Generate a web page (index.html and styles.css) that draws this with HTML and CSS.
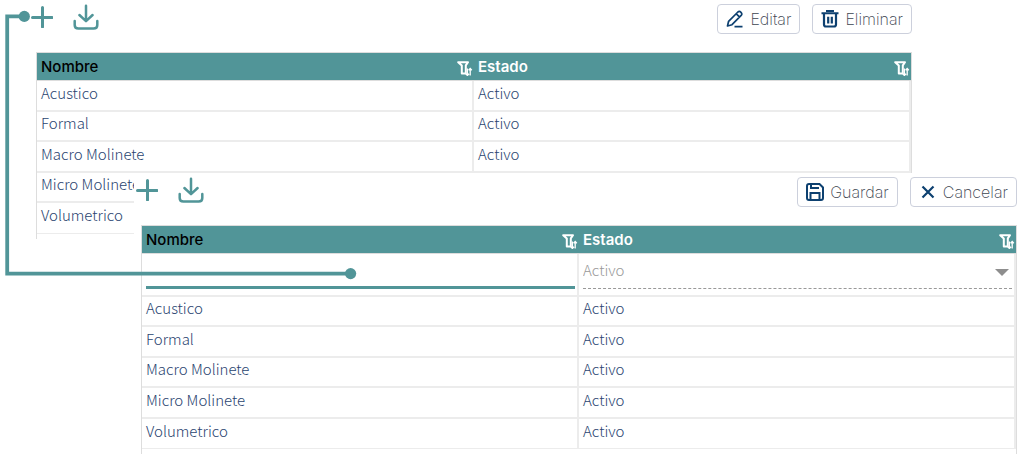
FILE: index.html
```html
<!DOCTYPE html>
<html lang="es">
<head>
<meta charset="utf-8">
<meta name="viewport" content="width=device-width, initial-scale=1">
<title>Catálogo</title>
<link rel="stylesheet" href="styles.css">
</head>
<body>
<svg class="symbols" aria-hidden="true">
  <symbol id="plus" viewBox="0 0 22 22"><path d="M11.5 1.5V21M1.5 11.5H21" fill="none" stroke="#519598" stroke-width="3" stroke-linecap="round"/></symbol>
  <symbol id="download" viewBox="0 0 26 26"><path d="M13 1.7V16.8M6.4 11L13 17.2L19.6 11M1.7 17V21Q1.7 24.6 5.4 24.6H20.6Q24.3 24.6 24.3 21V17" fill="none" stroke="#519598" stroke-width="2.5" stroke-linecap="round" stroke-linejoin="round"/></symbol>
  <symbol id="filter" viewBox="0 0 16 16"><path d="M1.2 2.2H11L8.8 5.4V13.6H4.8V5.6Z" fill="none" stroke="#fff" stroke-width="2" stroke-linejoin="round"/><path d="M10.4 8.5V15.5M8.8 13.7L10.4 15.5L12 13.7M13.2 15.5V8.5M11.6 10.3L13.2 8.5L14.8 10.3" fill="none" stroke="#fff" stroke-width="1.3"/></symbol>
  <symbol id="pencil" viewBox="0 0 18 18"><path d="M1.5 16L2.6 11.3L11.9 2Q13.4.8 15 2.3Q16.5 3.9 15.2 5.4L6 14.7ZM10.3 3.8L13.4 6.9M8.5 16.7H16.5" fill="none" stroke="#0d4070" stroke-width="1.7" stroke-linejoin="round"/></symbol>
  <symbol id="trash" viewBox="0 0 18 18"><path d="M5 1H13M.5 3.3H17.5" fill="none" stroke="#0d4070" stroke-width="2"/><path d="M3 4V14.5Q3 16.5 5 16.5H13Q15 16.5 15 14.5V4M7.2 6.8V13.5M10.8 6.8V13.5" fill="none" stroke="#0d4070" stroke-width="2.2"/></symbol>
  <symbol id="save" viewBox="0 0 18 18"><path d="M3 1H13.5L17 4.5V15Q17 17 15 17H3Q1 17 1 15V3Q1 1 3 1ZM5 1.5V5H13M4.5 17V10H13.5V17" fill="none" stroke="#0d4070" stroke-width="2"/></symbol>
  <symbol id="close" viewBox="0 0 18 18"><path d="M3.5 3.5L14.5 14.5M14.5 3.5L3.5 14.5" fill="none" stroke="#0d4070" stroke-width="2.2"/></symbol>
</svg>
<main class="stage">
  <section class="panel panel-list" aria-label="Listado">
    <div class="toolbar">
      <button class="tool" type="button" aria-label="Agregar"><svg class="icon-plus"><use href="#plus"/></svg></button>
      <button class="tool" type="button" aria-label="Descargar"><svg class="icon-download"><use href="#download"/></svg></button>
      <div class="actions">
        <button class="action" type="button"><svg class="icon"><use href="#pencil"/></svg>Editar</button>
        <button class="action" type="button"><svg class="icon"><use href="#trash"/></svg>Eliminar</button>
      </div>
    </div>
    <div class="grid">
      <table class="table">
        <thead><tr>
          <th class="sorted"><div class="head">Nombre<svg class="filter"><use href="#filter"/></svg></div></th>
          <th><div class="head">Estado<svg class="filter"><use href="#filter"/></svg></div></th>
        </tr></thead>
        <tbody>
          <tr><td>Acustico</td><td>Activo</td></tr>
          <tr><td>Formal</td><td>Activo</td></tr>
          <tr><td>Macro Molinete</td><td>Activo</td></tr>
          <tr><td>Micro Molinete</td><td></td></tr>
          <tr><td>Volumetrico</td><td></td></tr>
        </tbody>
      </table>
    </div>
  </section>

  <section class="panel panel-edit" aria-label="Nuevo registro">
    <div class="toolbar">
      <button class="tool" type="button" aria-label="Agregar"><svg class="icon-plus"><use href="#plus"/></svg></button>
      <button class="tool" type="button" aria-label="Descargar"><svg class="icon-download"><use href="#download"/></svg></button>
      <div class="actions">
        <button class="action" type="button"><svg class="icon"><use href="#save"/></svg>Guardar</button>
        <button class="action" type="button"><svg class="icon"><use href="#close"/></svg>Cancelar</button>
      </div>
    </div>
    <div class="grid">
      <table class="table">
        <thead><tr>
          <th class="sorted"><div class="head">Nombre<svg class="filter"><use href="#filter"/></svg></div></th>
          <th><div class="head">Estado<svg class="filter"><use href="#filter"/></svg></div></th>
        </tr></thead>
        <tbody>
          <tr class="edit-row">
            <td><input class="field" type="text" aria-label="Nombre"></td>
            <td><div class="picker"><select class="select" aria-label="Estado" disabled><option>Activo</option></select><svg class="caret" viewBox="0 0 14 7"><path d="M0 0H14L7 7Z" fill="#8e8e8e"/></svg></div></td>
          </tr>
          <tr><td>Acustico</td><td>Activo</td></tr>
          <tr><td>Formal</td><td>Activo</td></tr>
          <tr><td>Macro Molinete</td><td>Activo</td></tr>
          <tr><td>Micro Molinete</td><td>Activo</td></tr>
          <tr><td>Volumetrico</td><td>Activo</td></tr>
        </tbody>
      </table>
    </div>
  </section>

  <svg class="connector" viewBox="0 0 360 282" aria-hidden="true">
    <path d="M24 16.4H7.2V273.6H350.6" fill="none" stroke="#519598" stroke-width="3.8"/>
    <circle cx="24.3" cy="16.4" r="5.6" fill="#519598"/>
    <circle cx="350.6" cy="273.6" r="5.6" fill="#519598"/>
  </svg>
</main>
</body>
</html>
```
FILE: styles.css
```css
* { box-sizing: border-box; }

body {
  margin: 0;
  background: #fff;
  color: #2a4470;
  font-family: "Noto Sans CJK SC", "Open Sans", sans-serif;
  font-size: 15px;
  font-weight: 300;
}

button, input, select { font: inherit; color: inherit; }

.symbols { position: absolute; width: 0; height: 0; }

.stage { position: relative; min-height: 100vh; overflow: hidden; }

.panel { position: absolute; display: flex; flex-direction: column; background: #fff; }
.panel-list { top: 0; left: 29px; right: 105px; padding: 0 7px; }
.panel-edit { top: 173px; left: 134px; right: 0; bottom: 0; padding: 0 7px; }

.toolbar { display: flex; align-items: flex-start; height: 52px; padding-top: 4px; }
.tool {
  display: flex;
  align-items: center;
  justify-content: center;
  width: 44px;
  height: 26px;
  padding: 0;
  border: 0;
  background: none;
}
.tool:first-child { margin-left: -16px; }
.icon-plus { width: 22px; height: 22px; }
.icon-download { width: 26px; height: 26px; }

.actions { display: flex; gap: 12px; margin-left: auto; }
.action {
  display: flex;
  align-items: center;
  gap: 6px;
  height: 30px;
  padding: 0 8px;
  border: 1px solid #ccd0dc;
  border-radius: 4px;
  background: #fff;
  color: #3c4450;
  font-family: Inter, sans-serif;
  font-size: 16px;
  font-weight: 200;
  white-space: nowrap;
}
.icon { width: 18px; height: 18px; }

.grid { flex: 1; padding-bottom: 5px; border: 1px solid #ddd; border-bottom: 0; }
.table { width: 100%; border-collapse: separate; border-spacing: 0; table-layout: fixed; }
.table th {
  height: 28px;
  padding: 0 1px 0 4px;
  border-bottom: 1px solid #ddd;
  background: #519598;
  color: #fff;
  font-family: Inter, sans-serif;
  font-size: 15px;
  font-weight: 600;
  text-align: left;
}
.table .sorted { color: #000; font-weight: 500; }
.head { display: flex; align-items: center; justify-content: space-between; }
.filter { width: 16px; height: 16px; margin-top: 3px; }

.table td {
  height: 30px;
  padding: 0 4px 6px;
  border-right: 2px solid #ececec;
  border-bottom: 2px solid #ececec;
  line-height: 22px;
}
.table tr:nth-child(odd) td { height: 31px; }
.table tr:last-child td { border-bottom-width: 1px; }
.table .edit-row td { height: 43px; padding: 0 2px 6px 4px; }

.field {
  display: block;
  width: 100%;
  height: 35px;
  border: 0;
  border-bottom: 3px solid #519598;
  background: none;
  outline: 0;
}
.picker { position: relative; border-bottom: 1px dashed #999; }
.select {
  display: block;
  width: 100%;
  height: 34px;
  padding: 0 0 2px;
  border: 0;
  background: none;
  color: #999;
  opacity: 1;
  appearance: none;
}
.caret { position: absolute; top: 15px; right: 3px; width: 14px; height: 7px; }

.connector { position: absolute; top: 0; left: 0; width: 360px; height: 282px; pointer-events: none; }
```
